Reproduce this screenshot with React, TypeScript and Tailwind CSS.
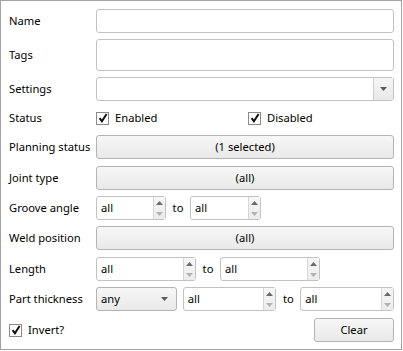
const font = "font-['Segoe_UI','Noto_Sans',sans-serif] text-[11.2px] text-black";

const Label = ({ children }: { children: string }) => (
  <div className="w-[87px] shrink-0 whitespace-nowrap leading-none">{children}</div>
);

const TextBox = ({ h = "h-[24px]" }: { h?: string }) => (
  <div className={`${h} flex-1 rounded-[3px] border border-[#c2c2c2] bg-white`} />
);

const Button = ({ children, w = "flex-1" }: { children: string; w?: string }) => (
  <div
    className={`${w} flex h-full items-center justify-center rounded-[3px] border border-[#b4b4b4] bg-gradient-to-b from-[#f7f7f7] to-[#e9e9e9]`}
  >
    {children}
  </div>
);

const Arrow = ({ color = "#5a5a5a" }: { color?: string }) => (
  <svg width="7" height="4" viewBox="0 0 7 4">
    <path d="M0 0h7L3.5 4z" fill={color} />
  </svg>
);

const Spinner = ({ w, value }: { w: string; value: string }) => (
  <div className={`${w} flex h-full rounded-[3px] border border-[#c2c2c2] bg-white`}>
    <div className="flex flex-1 items-center pl-[4px]">{value}</div>
    <div className="flex w-[12px] flex-col border-l border-[#d6d6d6] bg-gradient-to-b from-[#f6f6f6] to-[#ececec]">
      <div className="flex flex-1 items-center justify-center">
        <svg width="7" height="4" viewBox="0 0 7 4">
          <path d="M0 4h7L3.5 0z" fill="#6a6a6a" />
        </svg>
      </div>
      <div className="flex flex-1 items-center justify-center">
        <Arrow color="#b2b2b2" />
      </div>
    </div>
  </div>
);

const Check = () => (
  <div className="flex h-[13px] w-[13px] items-center justify-center border border-[#8a8a8a] bg-white">
    <svg width="10" height="10" viewBox="0 0 10 10">
      <path d="M1.6 5.2l2.3 3.1 4.7-7.3" fill="none" stroke="#111" strokeWidth="2" />
    </svg>
  </div>
);

const To = () => <div className="w-[24px] text-center">to</div>;

export default function App() {
  return (
    <div
      className={`${font} flex h-[350px] w-[402px] flex-col border border-[#a3a3a3] bg-white pl-[8px] pr-[7px] pt-[8px]`}
    >
      <div className="flex h-[24px] items-center">
        <Label>Name</Label>
        <TextBox />
      </div>
      <div className="mt-[6px] flex h-[32px] items-center">
        <Label>Tags</Label>
        <TextBox h="h-[32px]" />
      </div>
      <div className="mt-[6px] flex h-[24px] items-center">
        <Label>Settings</Label>
        <div className="flex h-full flex-1 rounded-[3px] border border-[#c2c2c2] bg-white">
          <div className="flex-1" />
          <div className="flex w-[20px] items-center justify-center border-l border-[#d0d0d0] bg-gradient-to-b from-[#f6f6f6] to-[#e8e8e8]">
            <Arrow />
          </div>
        </div>
      </div>
      <div className="mt-[5px] flex h-[24px] items-center">
        <Label>Status</Label>
        <Check />
        <span className="ml-[6px] w-[133px]">Enabled</span>
        <Check />
        <span className="ml-[6px]">Disabled</span>
      </div>
      <div className="mt-[5px] flex h-[24px] items-center">
        <Label>Planning status</Label>
        <Button>(1 selected)</Button>
      </div>
      <div className="mt-[7px] flex h-[24px] items-center">
        <Label>Joint type</Label>
        <Button>(all)</Button>
      </div>
      <div className="mt-[6px] flex h-[24px] items-center">
        <Label>Groove angle</Label>
        <Spinner w="w-[70px]" value="all" />
        <To />
        <Spinner w="w-[71px]" value="all" />
      </div>
      <div className="mt-[6px] flex h-[24px] items-center">
        <Label>Weld position</Label>
        <Button>(all)</Button>
      </div>
      <div className="mt-[7px] flex h-[24px] items-center">
        <Label>Length</Label>
        <Spinner w="w-[100px]" value="all" />
        <To />
        <Spinner w="w-[100px]" value="all" />
      </div>
      <div className="mt-[6px] flex h-[24px] items-center">
        <Label>Part thickness</Label>
        <div className="flex h-full w-[81px] items-center justify-between rounded-[3px] border border-[#b4b4b4] bg-gradient-to-b from-[#f7f7f7] to-[#e9e9e9] pl-[4px] pr-[8px]">
          <span>any</span>
          <Arrow />
        </div>
        <div className="w-[6px]" />
        <Spinner w="w-[94px]" value="all" />
        <To />
        <Spinner w="w-[94px]" value="all" />
      </div>
      <div className="mt-[7px] flex h-[24px] items-center">
        <Check />
        <span className="ml-[6px] flex-1">Invert?</span>
        <Button w="w-[80px]">Clear</Button>
      </div>
    </div>
  );
}
